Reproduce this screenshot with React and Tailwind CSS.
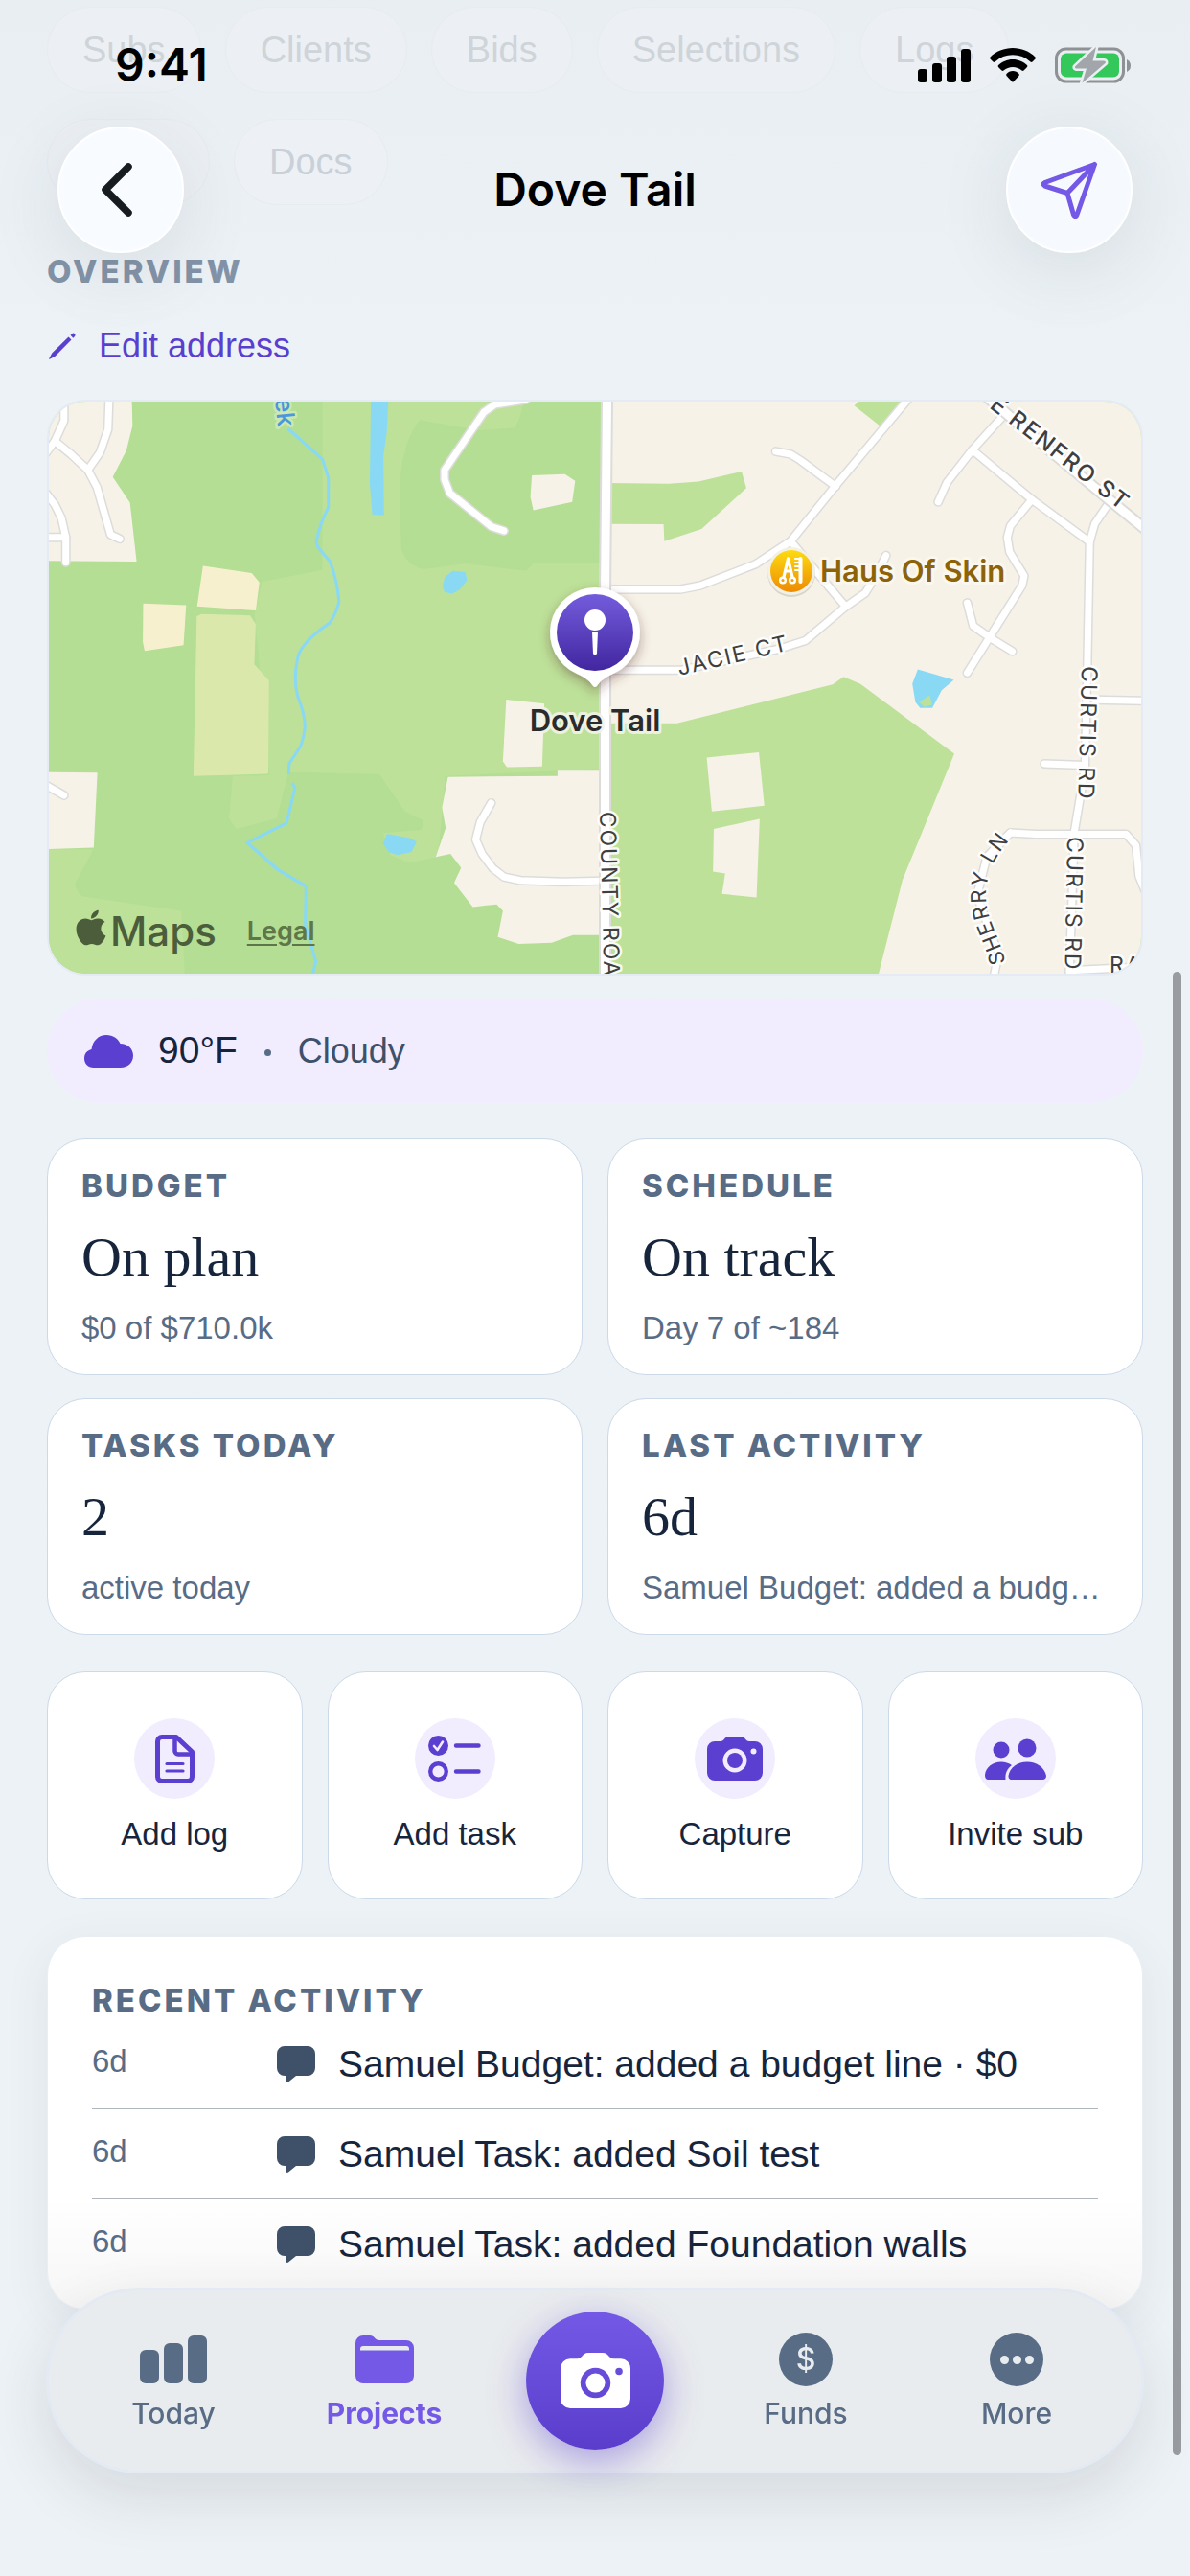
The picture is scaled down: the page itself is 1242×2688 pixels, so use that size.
import React, { useState } from "react";
import { FaApple } from "react-icons/fa";

const stats = [
  { label: "BUDGET", value: "On plan", note: "$0 of $710.0k" },
  { label: "SCHEDULE", value: "On track", note: "Day 7 of ~184" },
  { label: "TASKS TODAY", value: "2", note: "active today" },
  { label: "LAST ACTIVITY", value: "6d", note: "Samuel Budget: added a budget line" },
];

const activity = [
  { id: 1, age: "6d", text: "Samuel Budget: added a budget line · $0" },
  { id: 2, age: "6d", text: "Samuel Task: added Soil test" },
  { id: 3, age: "6d", text: "Samuel Task: added Foundation walls" },
];

const chips = ["Subs", "Clients", "Bids", "Selections", "Logs"];

function CameraIcon({ className }) {
  return (
    <svg viewBox="0 0 58 46" className={className} fill="currentColor" aria-hidden="true">
      <path
        fillRule="evenodd"
        d="M8 5H14C18 5 18 0 23 0H35C40 0 40 5 44 5H50A8 8 0 0 1 58 13V38A8 8 0 0 1 50 46H8A8 8 0 0 1 0 38V13A8 8 0 0 1 8 5ZM29 12.500A12.500 12.500 0 1 0 29 37.500A12.500 12.500 0 1 0 29 12.500ZM48.500 12.500A3 3 0 1 0 48.500 18.500A3 3 0 1 0 48.500 12.500Z"
      />
      <circle cx="29" cy="25" r="8" />
    </svg>
  );
}

function DocIcon() {
  return (
    <svg viewBox="0 0 41 51" className="h-[51px] w-[41px]" fill="none" stroke="currentColor" strokeLinejoin="round" aria-hidden="true">
      <path strokeWidth="5" d="M7 2.500H22L38.500 18V44A4.500 4.500 0 0 1 34 48.500H7A4.500 4.500 0 0 1 2.500 44V7A4.500 4.500 0 0 1 7 2.500Z" />
      <path strokeWidth="4.500" d="M20.500 4V17A3.500 3.500 0 0 0 24 20.500H38" />
      <path strokeWidth="3.200" strokeLinecap="round" d="M12 30.500H29M12 38H29" />
    </svg>
  );
}

function TaskIcon() {
  return (
    <svg viewBox="0 0 55 48" className="h-12 w-[55px]" fill="none" stroke="currentColor" strokeLinecap="round" aria-hidden="true">
      <circle cx="10.500" cy="10.500" r="10.500" fill="currentColor" stroke="none" />
      <path d="M6 11L9.500 15L15 6.500" stroke="#f1ecfe" strokeWidth="2.600" strokeLinejoin="round" />
      <circle cx="10.500" cy="37.500" r="8.300" strokeWidth="4.400" />
      <path strokeWidth="4.400" d="M29 10.500H52.500M29 37.500H52.500" />
    </svg>
  );
}

function PeopleIcon() {
  return (
    <svg viewBox="0 0 64 43" className="h-[43px] w-16" fill="currentColor" aria-hidden="true">
      <circle cx="17" cy="12" r="8.500" />
      <circle cx="44" cy="10" r="9.500" />
      <path d="M4 43C1 43 0 41 0 38C1 30 8 24.500 17 24.500C21 24.500 25 26 28 28C23 32 21 36 21.500 43Z" />
      <path d="M28 43C25 43 24.500 41 24.500 39C26 30 34 24.500 44 24.500C54 24.500 62 30 64 39C64 41 63 43 60 43Z" />
    </svg>
  );
}

function ChatIcon() {
  return (
    <svg viewBox="0 0 40 38" className="mt-1 h-[38px] w-10 shrink-0" fill="#3f5069" aria-hidden="true">
      <path d="M8 0H32A8 8 0 0 1 40 8V23A8 8 0 0 1 32 31H20L12 37.500C10.500 38.500 9 37.500 9 36V31H8A8 8 0 0 1 0 23V8A8 8 0 0 1 8 0Z" />
    </svg>
  );
}

const actions = [
  { label: "Add log", icon: <DocIcon /> },
  { label: "Add task", icon: <TaskIcon /> },
  { label: "Capture", icon: <CameraIcon className="h-[46px] w-[58px]" /> },
  { label: "Invite sub", icon: <PeopleIcon /> },
];

const westRoads = [
  "M70 40V97L45 150L20 182",
  "M45 150L90 185L135 225L160 270L197 393L222 404",
  "M193 40L190 120L168 180L135 225",
  "M20 284L45 315L63 350L75 400V465",
  "M20 400H75",
  "M20 1043L70 1070",
  "M1330 42L1245 55L1215 75L1108 225V250L1122 285L1235 372L1270 383",
  "M1235 1090L1205 1140L1193 1185L1210 1222L1240 1260L1270 1282L1315 1291L1430 1295L1545 1292",
];

const eastRoads = [
  "M850 40L665 265L550 410L460 470L320 525L270 535H80",
  "M512 177L550 184L575 200L665 268",
  "M550 410L690 580",
  "M793 447L770 495L740 545L690 580L588 668L520 690L270 745H80",
  "M1100 75L1013 173L948 258L926 308",
  "M1013 173L1165 302L1312 412",
  "M1365 305L1325 365L1312 412L1306 740L1300 1000L1273 1165L1260 1550",
  "M1165 302L1110 370L1102 400L1108 438L1145 500L1140 525L1000 752",
  "M1000 570L1015 630L1060 662L1115 696",
  "M1325 822L1460 825",
  "M1197 988L1300 992",
  "M1060 1220L1110 1167L1175 1171H1405L1430 1200L1438 1280L1460 1335",
  "M1110 1167L1050 1230L1025 1330L1060 1430L1080 1480L1066 1550",
  "M1260 1525L1460 1515",
];

function Roads({ paths, wide }) {
  return (
    <g fill="none" strokeLinecap="round" strokeLinejoin="round">
      {paths.map((d) => (
        <path key={d} d={d} stroke="#dddcdb" strokeWidth={wide ? 13 : 10} vectorEffect="non-scaling-stroke" />
      ))}
      {paths.map((d) => (
        <path key={d} d={d} stroke="#ffffff" strokeWidth={wide ? 9 : 7} vectorEffect="non-scaling-stroke" />
      ))}
    </g>
  );
}

function SiteMap() {
  return (
    <div className="relative mt-[35px] overflow-hidden rounded-[40px] border-2 border-[#e5ebf5]">
      <svg viewBox="3 2 1140 597" className="block w-full font-[Inter,sans-serif]" role="img" aria-label="Map of the project site">
        <defs>
          <linearGradient id="pin" x1="0" y1="0" x2="0" y2="1">
            <stop offset="0" stopColor="#735cdc" />
            <stop offset="1" stopColor="#4226a0" />
          </linearGradient>
          <linearGradient id="shop" x1="0" y1="0" x2="0" y2="1">
            <stop offset="0" stopColor="#fddb12" />
            <stop offset="1" stopColor="#ee8b02" />
          </linearGradient>
          <filter id="pinShadow" x="-50%" y="-50%" width="200%" height="200%">
            <feDropShadow dx="0" dy="5" stdDeviation="6" floodColor="#502020" floodOpacity="0.4" />
          </filter>
          <path id="sherry" d="M1001 588C996 558 980 543 981 513C983 488 992 476 1010 454" />
        </defs>
        <rect width="1148" height="602" fill="#b3de93" />
        <g transform="translate(-8 -17) scale(.3827 .4018)">
          <path fill="#bde199" d="M775 40V485L610 515L590 600L630 1018L530 1020L520 1130L540 1157L650 1130L682 1010L930 1015L1000 1112L1050 1135L1045 1160L940 1168L960 1225L1010 1245L1090 1230L1110 1020L1560 1000V40Z" />
          <path fill="#bde199" d="M20 1210H150L100 1300Q102 1320 120 1332L390 1370L400 1545H20Z" />
          <path fill="#b3de93" d="M1040 95C1000 140 985 220 985 300L990 430C1000 460 1020 475 1050 483L1165 468L1330 487L1350 467H1545V40H1325Q1318 85 1300 115L1200 122Z" />
          <g fill="#f6f2e7">
            <path d="M20 40H255L257 110L240 175L203 243L250 310L268 463L20 461Z" />
            <path d="M20 1010L161 1011L151 1206L20 1210Z" />
            <path d="M1346 239L1436 236L1464 253L1456 308L1350 330L1342 295Z" />
            <path d="M1276 821L1380 832L1374 995L1278 997L1267 982Z" />
            <path d="M1117 1022L1416 1020V1006H1550V1433H1458L1400 1453L1310 1456L1253 1438L1267 1370L1250 1353L1185 1360L1134 1297L1153 1258L1124 1222L1084 1230L1111 1155L1101 1102Z" />
          </g>
          <path fill="#f7f0cf" d="M449 474L582 493L603 517L593 590L433 579ZM286 572L403 576L396 680L290 695L285 672Z" />
          <path fill="#dbe8ac" d="M432 605L445 599L578 603L593 625L589 730L629 772L627 1014L423 1020Z" />
          <path fill="#8ad9f4" d="M907 40H955L950 130L941 190L943 343L911 341L904 260ZM1109 503L1130 487L1165 490L1169 512L1150 535L1128 547L1108 542L1102 527ZM951 1170L1013 1181L1032 1190L1018 1217L980 1225L957 1218L940 1195Z" />
          <path
            fill="none"
            stroke="#8ad9f4"
            strokeWidth="8"
            d="M680 117L775 197L791 245V322Q768 365 758 410L762 425L795 462Q815 510 820 567Q812 598 795 622Q745 655 725 680Q708 700 706 720Q695 770 708 815Q728 860 727 895Q720 940 710 950L684 988L683 1015M692 1038L700 1050L677 1142L570 1193L652 1262L730 1306L728 1405L757 1502L745 1545"
          />
          <Roads paths={westRoads} />
        </g>
        <g transform="translate(552 -17) scale(.4095 .4018)">
          <path fill="#f6f2e7" d="M80 40H1470V1550H80Z" />
          <path
            fill="#bde199"
            d="M80 259L240 261L315 255L425 229L437 272L323 378L228 410L226 366L80 365ZM712 58L730 40H840L777 110ZM80 883H260L657 782L685 762L728 781L967 962L835 1290L770 1550H80Z"
          />
          <path fill="#f6f2e7" d="M336 972L469 958L483 1097L349 1112ZM354 1157L471 1131L463 1335L375 1326L383 1273L352 1268Z" />
          <path fill="#8ad9f4" d="M874 743L966 770L935 797L911 843H880L868 828L860 780Z" />
          <path fill="#bde199" d="M878 828L904 810L910 835L890 840Z" />
          <Roads paths={eastRoads} />
          <Roads paths={["M1050 35L1200 165L1365 305L1460 384", "M82 30L77 540V1550"]} wide />
        </g>

        <g fill="#3f3f3f" stroke="#ffffff" strokeOpacity="0.9" strokeWidth="5" strokeLinejoin="round" paintOrder="stroke" fontSize="23" letterSpacing="2">
          <text transform="translate(984 8) rotate(38)" fontSize="24" fontWeight="500">E RENFRO ST</text>
          <text transform="translate(661 288) rotate(-13)">JACIE CT</text>
          <text transform="translate(1081 278) rotate(91.500)">CURTIS RD</text>
          <text transform="translate(1066 456) rotate(91)">CURTIS RD</text>
          <text transform="translate(578 430) rotate(88.500)">COUNTY ROAD</text>
          <text transform="translate(1110 598)">RAND</text>
          <text fontSize="22"><textPath href="#sherry">SHERRY LN</textPath></text>
          <text transform="translate(239 -1) rotate(84)" fontSize="26" fontWeight="500" fill="#4b96dc" stroke="#cfeab8" letterSpacing="0">ek</text>
        </g>

        <circle cx="778" cy="181" r="25" fill="#000000" opacity="0.120" />
        <circle cx="778" cy="179" r="25" fill="#f3f0e6" />
        <circle cx="778" cy="179" r="22" fill="url(#shop)" />
        <g fill="none" stroke="#ffffff" strokeWidth="3.200" strokeLinecap="round">
          <path d="M774.500 166L770 185M774.500 166L779 185M773 179H777" />
          <circle cx="769" cy="188.500" r="2.800" strokeWidth="2.400" />
          <circle cx="779" cy="188.500" r="2.800" strokeWidth="2.400" />
          <path d="M787.500 166V190" strokeWidth="4" />
          <path d="M782 166H786M782 170H786M782 174H786M782 178H786" strokeWidth="2.200" />
        </g>
        <text x="808" y="190" fontSize="31" fontWeight="600" fill="#8c6307" stroke="#faf7ef" strokeWidth="6" strokeLinejoin="round" paintOrder="stroke">
          Haus Of Skin
        </text>

        <path
          filter="url(#pinShadow)"
          fill="#ffffff"
          d="M573 196A47 47 0 0 1 592 286C583 290 578 294 575 299Q573 301 571 299C568 294 563 290 554 286A47 47 0 0 1 573 196Z"
        />
        <circle cx="573" cy="243" r="40" fill="url(#pin)" />
        <circle cx="573" cy="230" r="11" fill="#ffffff" />
        <path fill="#ffffff" d="M570 242H576L575 265Q573 268 571 265Z" />
        <text x="573" y="346" fontSize="31" fontWeight="600" textAnchor="middle" fill="#2b2b2b" stroke="#f3f3ea" strokeOpacity="0.900" strokeWidth="6" strokeLinejoin="round" paintOrder="stroke">
          Dove Tail
        </text>
      </svg>
      <div className="absolute bottom-4 left-7 flex items-center gap-8 font-[Inter,sans-serif] text-[#4c5d3b]">
        <span className="flex items-center gap-1 text-[42px] leading-[56px] font-medium">
          <FaApple className="mb-2 h-[42px] w-8" aria-hidden="true" />
          Maps
        </span>
        <a href="#legal" className="text-[27px] font-semibold text-[#5f7648] underline underline-offset-4">Legal</a>
      </div>
    </div>
  );
}

function StatusBar() {
  return (
    <div className="flex items-center justify-between pt-[40px] pr-[61px] pl-[120px]">
      <span className="text-[48px] leading-[56px] font-semibold">9:41</span>
      <div className="flex items-center gap-5">
        <svg viewBox="0 0 55 36" className="h-9 w-[55px]" aria-hidden="true">
          <rect y="22" width="10" height="14" rx="3" />
          <rect x="15" y="16" width="10" height="20" rx="3" />
          <rect x="30" y="9" width="10" height="27" rx="3" />
          <rect x="45" y="1" width="10" height="35" rx="3" />
        </svg>
        <svg viewBox="0 0 48 36" className="h-9 w-12" aria-hidden="true">
          <path d="M24 0C33 0 41.500 3.500 47.500 9.500Q48.300 10.500 47.500 11.500L44.500 14.500Q43.500 15.300 42.500 14.500A27 27 0 0 0 5.500 14.500Q4.500 15.300 3.500 14.500L.5 11.500Q-.3 10.500 .5 9.500C6.500 3.500 15 0 24 0Z" />
          <path d="M24 12C30 12 35 14.500 39 18Q39.800 19 39 20L35.500 23.500Q34.500 24.300 33.500 23.500A14.500 14.500 0 0 0 14.500 23.500Q13.500 24.300 12.500 23.500L9 20Q8.200 19 9 18C13 14.500 18 12 24 12Z" />
          <path d="M24 24Q28 24 30.500 27Q31.300 28 30.500 29L25 35Q24 36 23 35L17.500 29Q16.700 28 17.500 27Q20 24 24 24Z" />
        </svg>
        <svg viewBox="0 0 80 40" className="h-10 w-20" aria-hidden="true">
          <rect x="1.500" y="3" width="70" height="34" rx="10" fill="none" stroke="#8f9294" strokeWidth="3" />
          <path fill="#8f9294" d="M75 14Q79 16 79 20.500Q79 25 75 27Z" />
          <rect x="6" y="7.500" width="61" height="25" rx="6" fill="#34c759" />
          <path d="M43 1L21 21.500Q20.500 23 22 23.500H33L28.500 38.500L53 17.500Q53 15.500 51 15.500H39.500Z" fill="#a2a6ab" stroke="#e9eff3" strokeWidth="5" strokeLinejoin="round" paintOrder="stroke" />
        </svg>
      </div>
    </div>
  );
}

function Tab({ label, active, onClick, children }) {
  return (
    <button type="button" onClick={onClick} className={active ? "flex flex-1 flex-col items-center text-[#7458e6]" : "flex flex-1 flex-col items-center text-[#586c86]"}>
      <span className="mt-1 flex h-14 items-center justify-center">{children}</span>
      <span className={active ? "mt-2 text-[30px] leading-[40px] font-bold" : "mt-2 text-[30px] leading-[40px] font-medium"}>{label}</span>
    </button>
  );
}

function TabBar() {
  const [tab, setTab] = useState("Projects");

  return (
    <nav className="fixed inset-x-12 bottom-[107px] flex h-[194px] items-center rounded-full border-3 border-[#e4eaf3] bg-[#e9ecee] px-5 font-[Inter,sans-serif] shadow-[0_24px_64px_rgba(30,40,50,0.12)]">
      <Tab label="Today" active={tab === "Today"} onClick={() => setTab("Today")}>
        <svg viewBox="0 0 70 50" className="h-[50px] w-[70px]" fill="currentColor" aria-hidden="true">
          <rect y="15" width="20" height="35" rx="6" />
          <rect x="25" y="8" width="20" height="42" rx="6" />
          <rect x="50" width="20" height="50" rx="6" />
        </svg>
      </Tab>
      <Tab label="Projects" active={tab === "Projects"} onClick={() => setTab("Projects")}>
        <svg viewBox="0 0 61 50" className="h-[50px] w-[61px]" fill="currentColor" aria-hidden="true">
          <path fillRule="evenodd" d="M8 0H15C20 0 20 5 25 5H53A8 8 0 0 1 61 13V42A8 8 0 0 1 53 50H8A8 8 0 0 1 0 42V8A8 8 0 0 1 8 0ZM8 11Q5 11 5 14V15.500H56V14Q56 11 53 11Z" />
        </svg>
      </Tab>
      <div className="flex flex-1 justify-center">
        <button type="button" aria-label="Capture photo" className="flex size-36 items-center justify-center rounded-full bg-linear-to-b from-[#7459e6] to-[#5a3dcb] text-white shadow-[0_12px_40px_rgba(91,62,208,0.45)]">
          <CameraIcon className="h-[58px] w-[73px]" />
        </button>
      </div>
      <Tab label="Funds" active={tab === "Funds"} onClick={() => setTab("Funds")}>
        <span className="flex size-14 items-center justify-center rounded-full bg-current">
          <span className="text-[32px] leading-none font-medium text-[#e9ecef]">$</span>
        </span>
      </Tab>
      <Tab label="More" active={tab === "More"} onClick={() => setTab("More")}>
        <span className="flex size-14 items-center justify-center gap-1 rounded-full bg-current">
          <span className="size-[9px] rounded-full bg-[#e9ecef]" />
          <span className="size-[9px] rounded-full bg-[#e9ecef]" />
          <span className="size-[9px] rounded-full bg-[#e9ecef]" />
        </span>
      </Tab>
    </nav>
  );
}

export default function App() {
  return (
    <div className="relative min-h-screen overflow-hidden bg-[#edf2f6] bg-linear-to-b from-[#e8eef2] to-[#edf2f6] to-[380px] font-['Liberation_Sans',Arial,sans-serif] text-[#17253c]">
      <main className="px-[49px] pt-[7px]">
        <div className="flex flex-wrap gap-x-[25px] gap-y-[27px] text-[38px] leading-[88px] text-[#cfd4d9]">
          {chips.map((chip) => (
            <span key={chip} className="rounded-full border border-[#e7ecf0] bg-[#ecf0f5] px-9">{chip}</span>
          ))}
        </div>
        <div className="mt-[27px] flex gap-[25px] text-[38px] leading-[88px] text-[#c9d0d8]">
          <span className="w-[170px] rounded-full border border-[#e7ecf0] bg-[#ecf0f4]" />
          <span className="rounded-full border border-[#e7ecf0] bg-[#edf1f6] px-9">Docs</span>
        </div>

        <h2 className="mt-[49px] font-[Inter,sans-serif] text-[33px] leading-[40px] font-extrabold tracking-[3px] text-[#8393a7]">OVERVIEW</h2>
        <button type="button" className="mt-[37px] flex items-center gap-6 text-[36px] leading-[42px] text-[#5a3fcf]">
          <svg viewBox="0 0 28 28" className="ml-[2px] size-7" fill="currentColor" aria-hidden="true">
            <path d="M20.500 4.500L23.500 7.500L6.500 24.800L.8 27.800Q0 28 .2 27.200L3.200 21.500ZM22.500 2.800L24 1.200Q25.500 0 27 1.200Q28.200 2.800 26.800 4.200L25.300 5.700Z" />
          </svg>
          Edit address
        </button>

        <SiteMap />

        <div className="mt-6 flex h-[109px] items-center rounded-full bg-[#f1ecfe] px-[39px]">
          <svg viewBox="0 0 51 34" className="h-[34px] w-[51px]" fill="#5b3fd0" aria-hidden="true">
            <path d="M9.500 34C4 34 0 30 0 24.500C0 19 3.500 16 7.500 15C8.500 6 15 0 23 0C30 0 35 3.500 37.500 9C45 9 51 14 51 21.500C51 29 45.500 34 38 34Z" />
          </svg>
          <span className="ml-[26px] text-[39px]">90°F</span>
          <span className="mx-7 mt-1 size-[7px] rounded-full bg-[#586c86]" />
          <span className="text-[36px] text-[#3f5069]">Cloudy</span>
        </div>

        <section className="mt-[37px] grid grid-cols-2 gap-x-[26px] gap-y-6">
          {stats.map((s) => (
            <div key={s.label} className="min-w-0 rounded-[40px] border border-[#cbd9e9] bg-white px-[35px] pt-7 pb-7">
              <h3 className="font-[Inter,sans-serif] text-[33px] leading-[40px] font-extrabold tracking-[3px] text-[#586c86]">{s.label}</h3>
              <p className="mt-[23px] font-['Liberation_Serif',serif] text-[58px] leading-[64px]">{s.value}</p>
              <p className="mt-[22px] truncate text-[33px] leading-[40px] text-[#586c86]">{s.note}</p>
            </div>
          ))}
        </section>

        <section className="mt-[38px] grid grid-cols-4 gap-[26px]">
          {actions.map((a) => (
            <button key={a.label} type="button" className="flex flex-col items-center rounded-[40px] border border-[#cbd9e9] bg-white pt-12 pb-[47px]">
              <span className="flex size-[84px] items-center justify-center rounded-full bg-[#f1ecfe] text-[#5b3fd0]">{a.icon}</span>
              <span className="mt-[17px] text-[33px] leading-[40px]">{a.label}</span>
            </button>
          ))}
        </section>

        <section className="mt-[38px] rounded-[40px] border border-[#e8eef3] bg-linear-to-b from-white from-70% to-[#f6f6f6] px-[46px] pt-[46px] pb-5 shadow-[0_12px_48px_rgba(40,60,80,0.08)]">
          <h3 className="font-[Inter,sans-serif] text-[33px] leading-[40px] font-extrabold tracking-[3px] text-[#586c86]">RECENT ACTIVITY</h3>
          <ul className="divide-y divide-[#b0b6be]">
            {activity.map((item) => (
              <li key={item.id} className="flex h-[94px] items-start pt-6">
                <span className="w-[193px] text-[33px] leading-[40px] text-[#586c86]">{item.age}</span>
                <ChatIcon />
                <span className="ml-6 text-[39px] leading-[46px]">{item.text}</span>
              </li>
            ))}
          </ul>
        </section>
      </main>

      <header className="absolute inset-x-0 top-0 font-[Inter,sans-serif] text-black">
        <StatusBar />
        <div className="mt-9 flex items-center justify-between px-[60px]">
          <button type="button" aria-label="Back" className="flex size-[132px] items-center justify-center rounded-full border-2 border-white bg-[#f8fbff] shadow-[0_16px_80px_rgba(40,50,60,0.10)]">
            <svg viewBox="0 0 34 58" className="mr-2 h-[58px] w-[34px]" fill="none" stroke="#171c20" strokeWidth="7.500" strokeLinecap="round" strokeLinejoin="round" aria-hidden="true">
              <path d="M29 5L5 29L29 53" />
            </svg>
          </button>
          <h1 className="text-[48px] leading-[56px] font-semibold">Dove Tail</h1>
          <button type="button" aria-label="Share" className="flex size-[132px] items-center justify-center rounded-full border-2 border-white bg-[#f6fafe] shadow-[0_16px_80px_rgba(40,50,60,0.10)]">
            <svg viewBox="0 0 60 60" className="size-[60px]" fill="none" stroke="#7458e6" strokeWidth="5" strokeLinecap="round" strokeLinejoin="round" aria-hidden="true">
              <path d="M56.500 3.500L4.500 22.500Q1.500 24 4.500 26L28 33.500L34.500 56Q36.500 59.500 38 56ZM56.500 3.500L28 33.500" />
            </svg>
          </button>
        </div>
      </header>

      <div className="absolute top-[1014px] right-[9px] bottom-[126px] w-[9px] rounded-full bg-[#999ca0]" />
      <TabBar />
    </div>
  );
}
